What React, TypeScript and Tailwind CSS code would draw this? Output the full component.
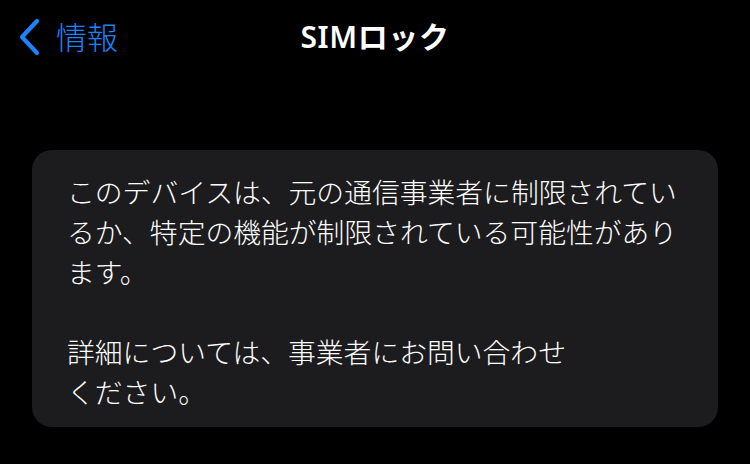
const jp = { fontFamily: '"Noto Sans", "Noto Sans CJK JP", sans-serif' };

function BackChevron() {
  return (
    <svg width="24" height="40" viewBox="0 0 24 40" fill="none">
      <path
        d="M20 4 L5 20 L20 36"
        stroke="#1a84ff"
        strokeWidth="4.2"
        strokeLinecap="round"
        strokeLinejoin="round"
      />
    </svg>
  );
}

export default function App() {
  return (
    <div className="w-[750px] h-[464px] bg-black overflow-hidden" style={jp}>
      <header className="grid grid-cols-[1fr_auto_1fr] items-center h-[74px]">
        <button className="flex items-center gap-[15px] pl-[17px] text-[#1a84ff] text-[31px] font-light leading-none">
          <BackChevron />
          <span>情報</span>
        </button>
        <h1 className="text-white text-[30px] font-semibold leading-none tracking-[0.6px]">SIMロック</h1>
        <div />
      </header>

      <section className="mt-[76px] mx-[32px] w-[686px] rounded-[20px] bg-[#1c1c1e] pl-[35px] pt-[22px] pb-[15px]">
        <p className="text-white text-[27.8px] font-light leading-[40px] whitespace-nowrap">
          このデバイスは、元の通信事業者に制限されてい
          <br />
          るか、特定の機能が制限されている可能性があり
          <br />
          ます。
        </p>
        <p className="text-white text-[27.8px] font-light leading-[40px] whitespace-nowrap mt-[40px]">
          詳細については、事業者にお問い合わせ
          <br />
          ください。
        </p>
      </section>
    </div>
  );
}
